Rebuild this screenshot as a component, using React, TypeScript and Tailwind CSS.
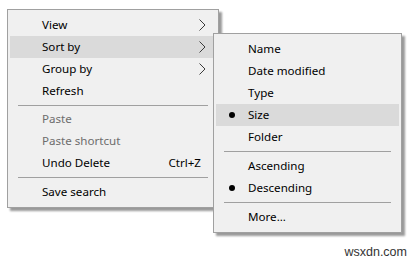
import React from "react";

const font = { fontFamily: '"Noto Sans", "Open Sans", sans-serif' };

function Chevron() {
  return (
    <svg width="7" height="12" viewBox="0 0 7 12" className="shrink-0">
      <polyline points="0.5,0.5 6,6 0.5,11.5" fill="none" stroke="#3c3c3c" strokeWidth="1" />
    </svg>
  );
}

type Item = {
  label: string;
  sub?: boolean;
  disabled?: boolean;
  hl?: boolean;
  shortcut?: string;
  bullet?: boolean;
};

function Row({ item }: { item: Item }) {
  return (
    <div
      className={`mx-[2px] h-[22px] flex items-center pr-[10px] text-[11.6px] leading-none ${
        item.hl ? "bg-[#dadada]" : ""
      } ${item.disabled ? "text-[#6d6d6d]" : "text-black"}`}
    >
      <div className="w-[32px] shrink-0 flex justify-center">
        {item.bullet && <span className="w-[6px] h-[6px] rounded-full bg-black" />}
      </div>
      <span className="flex-1">{item.label}</span>
      {item.shortcut && <span className="mr-[5px]">{item.shortcut}</span>}
      {item.sub && <Chevron />}
    </div>
  );
}

function Sep({ h }: { h: string }) {
  return (
    <div className={`${h} flex items-center px-[10px]`}>
      <div className="h-px w-full bg-[#a0a0a0]" />
    </div>
  );
}

export default function App() {
  return (
    <div className="relative w-[419px] h-[262px] bg-white overflow-hidden" style={font}>
      <div className="absolute left-[7px] top-[9px] w-[212px] border border-[#a0a0a0] bg-[#f0f0f0] py-[4px] shadow-[3px_3px_2px_rgba(0,0,0,0.4)]">
        <Row item={{ label: "View", sub: true }} />
        <Row item={{ label: "Sort by", sub: true, hl: true }} />
        <Row item={{ label: "Group by", sub: true }} />
        <Row item={{ label: "Refresh" }} />
        <Sep h="h-[6px]" />
        <Row item={{ label: "Paste", disabled: true }} />
        <Row item={{ label: "Paste shortcut", disabled: true }} />
        <Row item={{ label: "Undo Delete", shortcut: "Ctrl+Z" }} />
        <Sep h="h-[7px]" />
        <Row item={{ label: "Save search" }} />
      </div>

      <div className="absolute left-[213px] top-[33px] w-[189px] border border-[#a0a0a0] bg-[#f0f0f0] py-[4px] shadow-[3px_3px_2px_rgba(0,0,0,0.4)]">
        <Row item={{ label: "Name" }} />
        <Row item={{ label: "Date modified" }} />
        <Row item={{ label: "Type" }} />
        <Row item={{ label: "Size", hl: true, bullet: true }} />
        <Row item={{ label: "Folder" }} />
        <Sep h="h-[7px]" />
        <Row item={{ label: "Ascending" }} />
        <Row item={{ label: "Descending", bullet: true }} />
        <Sep h="h-[7px]" />
        <Row item={{ label: "More..." }} />
      </div>

      <div
        className="absolute right-[12px] bottom-[4px] text-[12.5px] leading-none text-[#333]"
        style={{ fontFamily: '"Liberation Sans", Arial, sans-serif' }}
      >
        wsxdn.com
      </div>
    </div>
  );
}
